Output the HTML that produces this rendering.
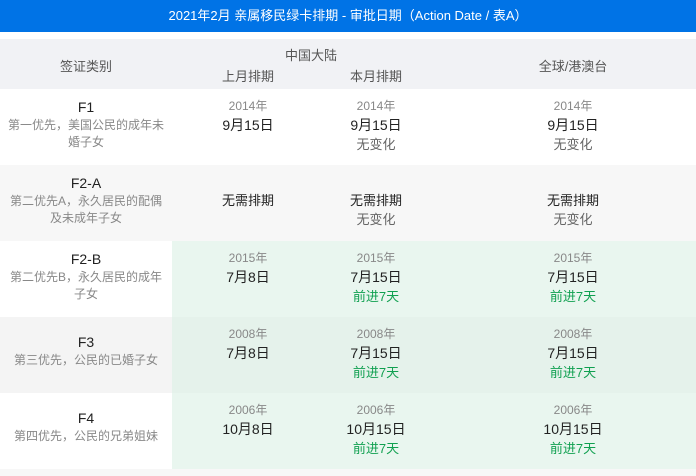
<!DOCTYPE html>
<html><head><meta charset="utf-8"><style>
*{margin:0;padding:0;box-sizing:border-box}
html,body{width:696px;height:476px;overflow:hidden}
body{background:#fff;font-family:"Liberation Sans","Noto Sans CJK SC",sans-serif;position:relative}
.title{position:absolute;left:0;top:0;width:696px;height:32px;background:#0073e6;color:#fff;font-size:13px;text-align:center;line-height:32px}
.hdr{position:absolute;left:0;top:39px;width:696px;height:50px;background:#f1f2f5;color:#555;font-size:13px}
.hdr span{position:absolute;transform:translateX(-50%);white-space:nowrap}
.row{position:absolute;left:0;width:696px;height:76px}
.g{position:absolute;left:172px;top:0;width:524px;height:76px}
.c{position:absolute;top:8px;transform:translateX(-50%);text-align:center;white-space:nowrap;line-height:19px}
.code{font-size:14px;color:#222;line-height:20px}
.sub{font-size:12px;color:#888;line-height:17px;width:160px;white-space:normal}
.y{font-size:12px;color:#888}
.d{font-size:14px;color:#222}
.n{font-size:13px;color:#666}
.a{font-size:13px;color:#10a050}
.b{font-size:13px;color:#222}
</style></head><body>
<div class="title">2021年2月 亲属移民绿卡排期 - 审批日期（Action Date / 表A）</div>
<div class="hdr">
<span style="left:86px;top:17px">签证类别</span>
<span style="left:311px;top:6px">中国大陆</span>
<span style="left:248px;top:27px">上月排期</span>
<span style="left:376px;top:27px">本月排期</span>
<span style="left:573px;top:17px">全球/港澳台</span>
</div>

<div class="row" style="top:89px;background:#fff">
<div class="c" style="left:86px"><div class="code">F1</div><div class="sub">第一优先，美国公民的成年未婚子女</div></div>
<div class="c" style="left:248px"><div class="y">2014年</div><div class="d">9月15日</div></div>
<div class="c" style="left:376px"><div class="y">2014年</div><div class="d">9月15日</div><div class="n">无变化</div></div>
<div class="c" style="left:573px"><div class="y">2014年</div><div class="d">9月15日</div><div class="n">无变化</div></div>
</div>

<div class="row" style="top:165px;background:#f7f7f7">
<div class="c" style="left:86px"><div class="code">F2-A</div><div class="sub">第二优先A，永久居民的配偶及未成年子女</div></div>
<div class="c" style="left:248px;top:26px"><div class="b">无需排期</div></div>
<div class="c" style="left:376px;top:26px"><div class="b">无需排期</div><div class="n">无变化</div></div>
<div class="c" style="left:573px;top:26px"><div class="b">无需排期</div><div class="n">无变化</div></div>
</div>

<div class="row" style="top:241px;background:#fff">
<div class="g" style="background:#e9f6ef"></div>
<div class="c" style="left:86px"><div class="code">F2-B</div><div class="sub">第二优先B，永久居民的成年子女</div></div>
<div class="c" style="left:248px"><div class="y">2015年</div><div class="d">7月8日</div></div>
<div class="c" style="left:376px"><div class="y">2015年</div><div class="d">7月15日</div><div class="a">前进7天</div></div>
<div class="c" style="left:573px"><div class="y">2015年</div><div class="d">7月15日</div><div class="a">前进7天</div></div>
</div>

<div class="row" style="top:317px;background:#f4f4f4">
<div class="g" style="background:#e5f2eb"></div>
<div class="c" style="left:86px"><div class="code" style="margin-top:7px">F3</div><div class="sub">第三优先，公民的已婚子女</div></div>
<div class="c" style="left:248px"><div class="y">2008年</div><div class="d">7月8日</div></div>
<div class="c" style="left:376px"><div class="y">2008年</div><div class="d">7月15日</div><div class="a">前进7天</div></div>
<div class="c" style="left:573px"><div class="y">2008年</div><div class="d">7月15日</div><div class="a">前进7天</div></div>
</div>

<div class="row" style="top:393px;background:#fff">
<div class="g" style="background:#e9f6ef"></div>
<div class="c" style="left:86px"><div class="code" style="margin-top:7px">F4</div><div class="sub">第四优先，公民的兄弟姐妹</div></div>
<div class="c" style="left:248px"><div class="y">2006年</div><div class="d">10月8日</div></div>
<div class="c" style="left:376px"><div class="y">2006年</div><div class="d">10月15日</div><div class="a">前进7天</div></div>
<div class="c" style="left:573px"><div class="y">2006年</div><div class="d">10月15日</div><div class="a">前进7天</div></div>
</div>
<div class="row" style="top:469px;height:7px;background:#f7f7f7"></div>
</body></html>
